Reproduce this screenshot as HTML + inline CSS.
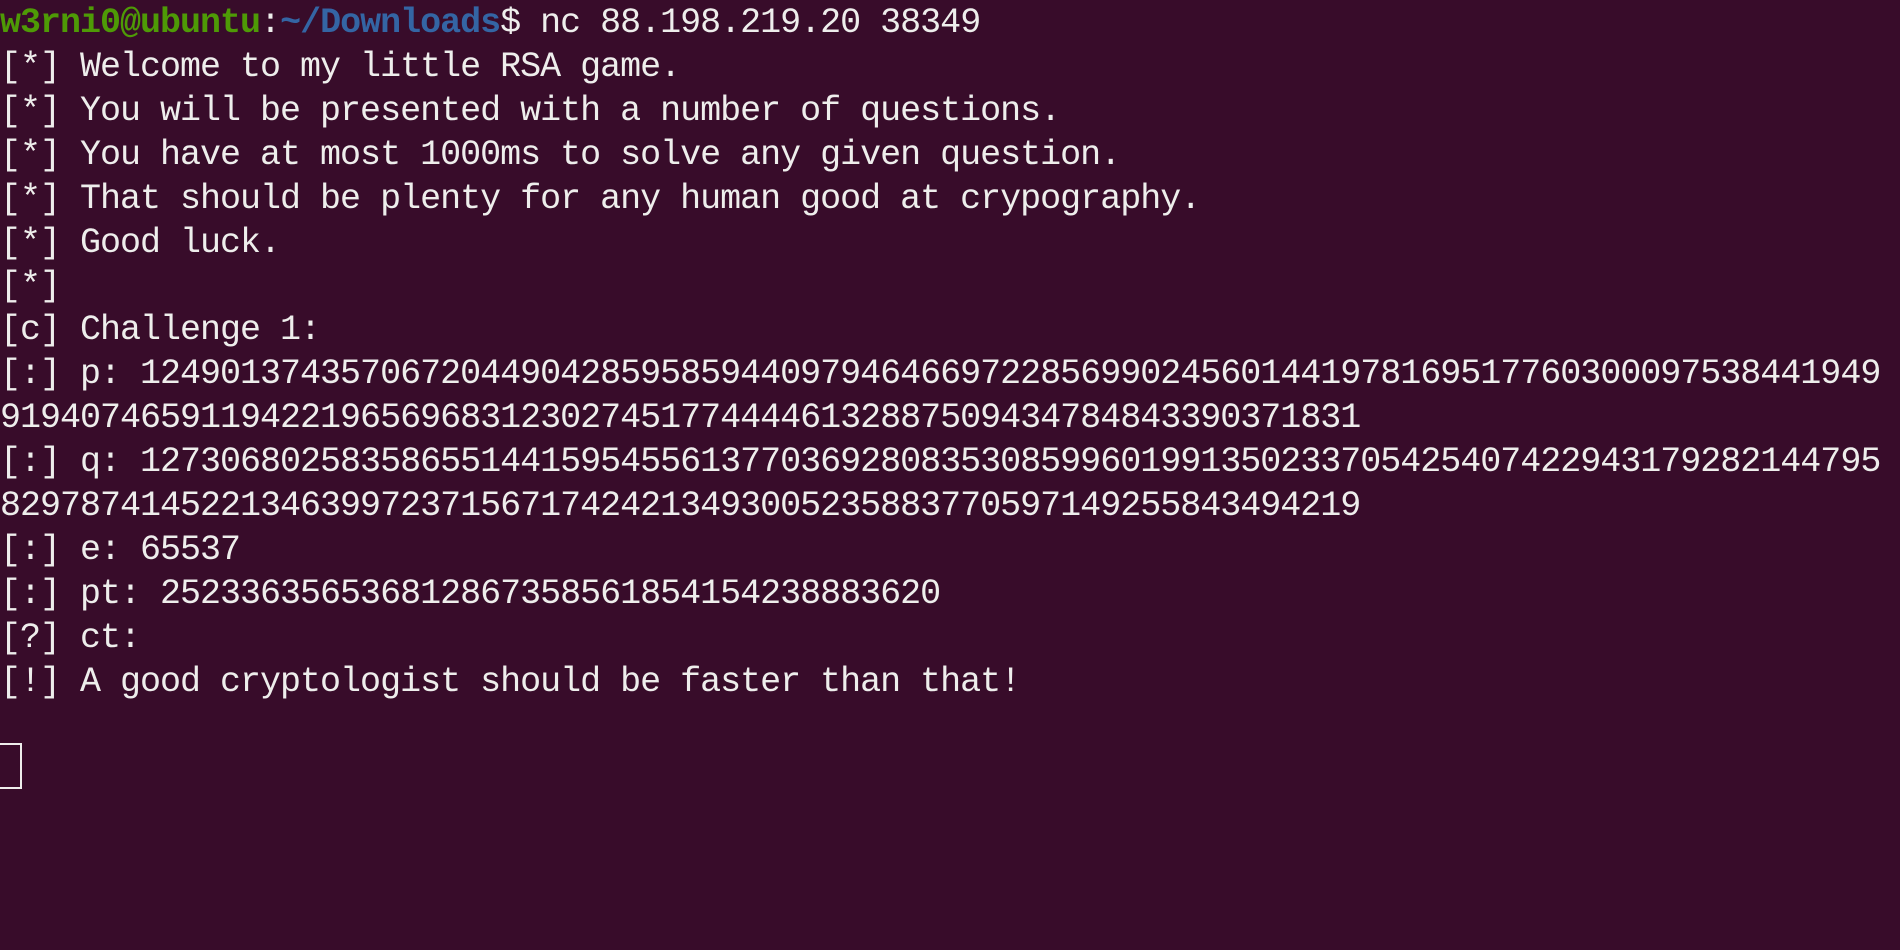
<!DOCTYPE html>
<html><head><meta charset="utf-8"><style>
html,body{margin:0;padding:0;background:#380c2a;width:1900px;height:950px;overflow:hidden}
pre{margin:0;padding:2px 0 0 0;font-family:"Liberation Mono",monospace;font-size:35px;letter-spacing:-1.0px;line-height:43.9px;color:#eeeeec;white-space:pre}
.g{color:#4e9a06;font-weight:bold}.b{color:#3465a4;font-weight:bold}
.cur{position:absolute;left:0;top:743px;width:22px;height:46px;border:2px solid #eeeeec;border-left:none;box-sizing:border-box}
</style></head><body>
<pre><span class="g">w3rni0@ubuntu</span>:<span class="b">~/Downloads</span>$ nc 88.198.219.20 38349
[*] Welcome to my little RSA game.
[*] You will be presented with a number of questions.
[*] You have at most 1000ms to solve any given question.
[*] That should be plenty for any human good at crypography.
[*] Good luck.
[*]
[c] Challenge 1:
[:] p: 124901374357067204490428595859440979464669722856990245601441978169517760300097538441949
91940746591194221965696831230274517744446132887509434784843390371831
[:] q: 127306802583586551441595455613770369280835308599601991350233705425407422943179282144795
82978741452213463997237156717424213493005235883770597149255843494219
[:] e: 65537
[:] pt: 252336356536812867358561854154238883620
[?] ct:
[!] A good cryptologist should be faster than that!
</pre>
<div class="cur"></div>
</body></html>
